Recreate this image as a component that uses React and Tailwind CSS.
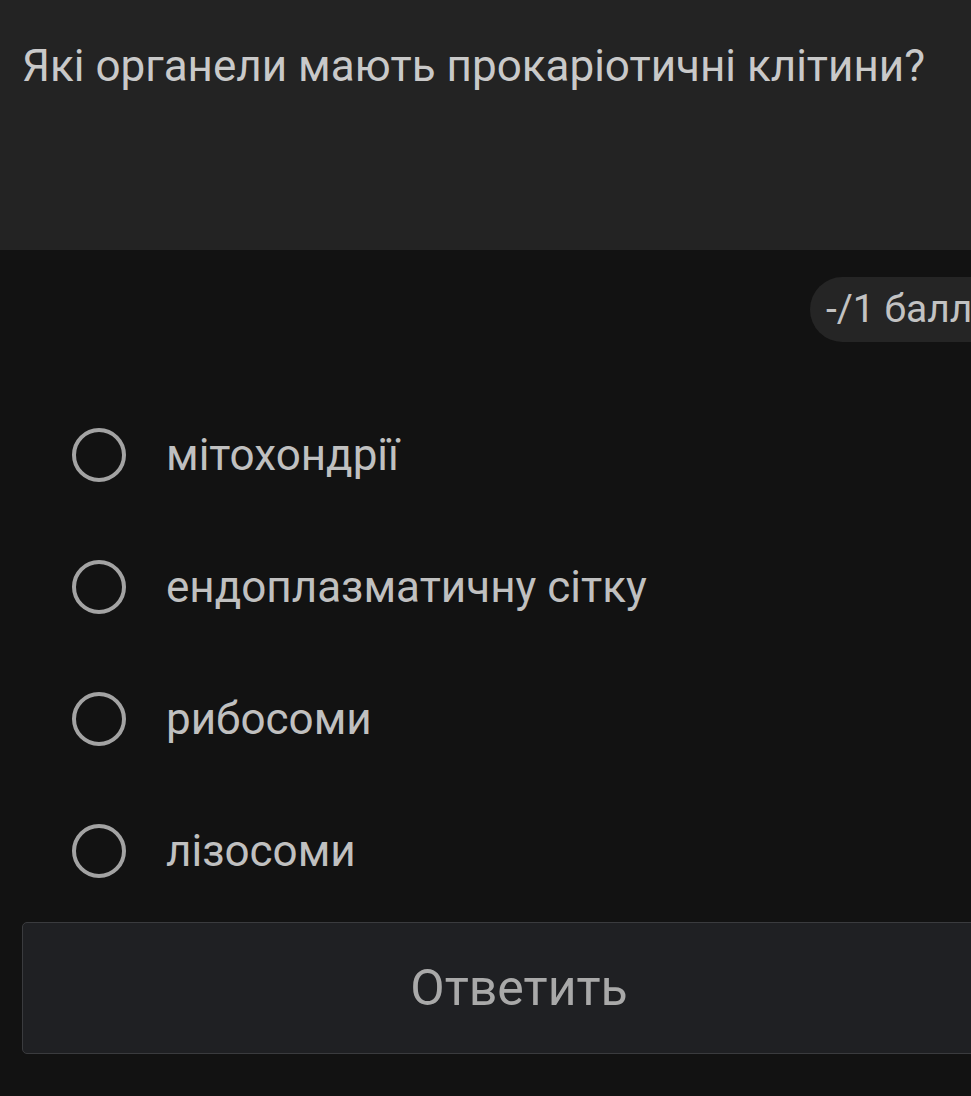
import React, { useState } from 'react';

const options = ['мітохондрії', 'ендоплазматичну сітку', 'рибосоми', 'лізосоми'];

const App = () => {
  const [selected, setSelected] = useState(null);

  return (
    <div
      className="w-[971px] h-[1096px] overflow-hidden bg-[#121212]"
      style={{ fontFamily: 'Roboto, "Noto Sans", sans-serif' }}
    >
      {/* question header */}
      <div className="h-[250px] bg-[#232323] pl-[22px] pt-[38px]">
        <h1 className="text-[44px] leading-[56px] font-normal text-[#c9c9c9] whitespace-nowrap">
          Які органели мають прокаріотичні клітини?
        </h1>
      </div>

      <div className="flex justify-end pt-[27px]">
        <div className="h-[65px] w-[180px] shrink-0 -mr-[19px] rounded-l-full bg-[#252525] pl-[16px] flex items-center">
          <span className="text-[39px] text-[#c2c2c2] whitespace-nowrap">-/1 балл</span>
        </div>
      </div>

      <div className="flex flex-col pt-[86px] pl-[72px] gap-[78px]">
        {options.map((opt, i) => (
          <button
            key={opt}
            onClick={() => setSelected(i)}
            className="flex items-center h-[54px] text-left"
          >
            <span className="w-[54px] h-[54px] shrink-0 rounded-full border-[4px] border-[#a3a3a3] flex items-center justify-center">
              {selected === i && <span className="w-[26px] h-[26px] rounded-full bg-[#a3a3a3]" />}
            </span>
            <span className="ml-[40px] text-[44px] text-[#c0c0c0] whitespace-nowrap">{opt}</span>
          </button>
        ))}
      </div>

      <div className="pl-[22px] pt-[44px]">
        <button className="w-[994px] h-[132px] rounded-[5px] border border-[#3a3b3e] bg-[#1f2023] flex items-center justify-center">
          <span className="text-[50px] text-[#a9a9a9]">Ответить</span>
        </button>
      </div>
    </div>
  );
};

export default App;
